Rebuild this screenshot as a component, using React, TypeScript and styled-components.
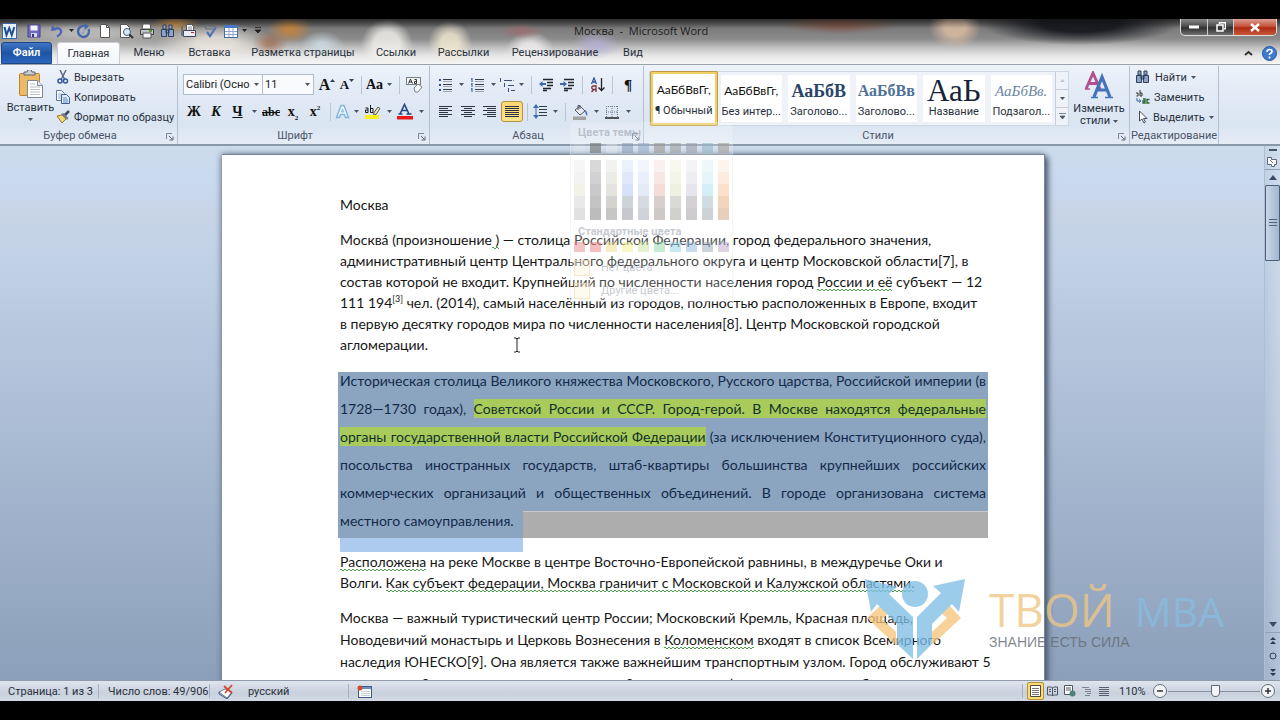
import React from "react";
import styled, { createGlobalStyle, css } from "styled-components";

const UI = `Roboto, "Noto Sans", sans-serif`;
const DOC = `Lato, "Open Sans", sans-serif`;
const SERIF = `"Liberation Serif", serif`;

const Global = createGlobalStyle`
  *, *::before, *::after { box-sizing: border-box; }
  html, body, #root { height: 100%; }
  body { margin: 0; background: #000; font-family: ${UI}; font-size: 11px; color: #28303c; overflow: hidden; }
  button, input, select { font: inherit; color: inherit; margin: 0; padding: 0; border: 0; background: none; }
  button { cursor: default; }
  p { margin: 0; }
  svg { display: block; flex: none; }
`;

/* ---------- window frame ---------- */
const Screen = styled.div`
  display: flex;
  flex-direction: column;
  height: 100vh;
  padding: 19px 0;
  background: #000;
`;
const Chrome = styled.header`
  height: 45px;
  flex: none;
  display: flex;
  flex-direction: column;
  background:
    linear-gradient(#1118 0, #1110 9px),
    radial-gradient(ellipse 26px 26px at 387px 26px, #f2f1ecd0 50%, #fff0 100%),
    radial-gradient(ellipse 22px 22px at 450px 24px, #f3ead2d0 40%, #fff0 100%),
    radial-gradient(ellipse 22px 8px at 522px 12px, #9c6b70c0 20%, #fff0 100%),
    radial-gradient(ellipse 24px 20px at 530px 32px, #f1eeeed0 40%, #fff0 100%),
    radial-gradient(ellipse 24px 14px at 596px 26px, #b3aed6c0 20%, #fff0 100%),
    radial-gradient(ellipse 60px 10px at 840px 5px, #7c4c3ac0 20%, #fff0 100%),
    radial-gradient(ellipse 26px 22px at 955px 8px, #d8b9a0e0 40%, #fff0 100%),
    radial-gradient(ellipse 22px 14px at 290px 10px, #c98238d0 20%, #fff0 100%),
    radial-gradient(ellipse 24px 10px at 175px 4px, #d59a4fd0 20%, #fff0 100%),
    radial-gradient(ellipse 18px 12px at 270px 24px, #a26a4cb0 20%, #fff0 100%),
    radial-gradient(ellipse 22px 14px at 322px 26px, #cfe0e6c0 20%, #fff0 100%),
    radial-gradient(ellipse 60px 20px at 215px 24px, #f4eee6c0 30%, #fff0 100%),
    radial-gradient(ellipse 110px 16px at 90px 14px, #c4c2bfd0 20%, #fff0 100%),
    radial-gradient(ellipse 100px 22px at 1080px 4px, #14161cf0 40%, #fff0 100%),
    linear-gradient(#4c4c4c 0, #7c7c7c 10px, #8b8b8b 20px, #bdbdbd 28px, #e4e4e4 36px, #f6f6f6 45px);
`;
const TitleRow = styled.div`
  display: flex;
  height: 23px;
  align-items: center;
  position: relative;
`;
const Quick = styled.div`
  display: flex;
  align-items: center;
  padding-left: 1px;
`;
const QuickButton = styled.button<{ $w?: number }>`
  width: ${(p) => p.$w ?? 21}px;
  height: 20px;
  display: flex;
  align-items: center;
  justify-content: center;
  gap: 4px;
`;
const Title = styled.h1`
  flex: 1;
  margin: 0;
  padding-left: 308px;
  font: 400 11px/20px "Open Sans", sans-serif;
  color: #1b1b1b;
`;
const WindowButtons = styled.div`
  display: flex;
  align-self: flex-start;
  margin-right: 3px;
  height: 17px;
  border: 1px solid #ddd;
  border-top: 0;
  border-radius: 0 0 5px 5px;
  overflow: hidden;
  background: linear-gradient(#8a8a8a, #4c4c4c 45%, #2f2f2f 55%, #707070);
`;
const WindowButton = styled.button<{ $close?: boolean }>`
  width: ${(p) => (p.$close ? 43 : 26)}px;
  display: flex;
  align-items: center;
  justify-content: center;
  & + & { border-left: 1px solid #ccc; }
  ${(p) => p.$close && css`background: linear-gradient(#d9a093, #c8543c 45%, #ad2a12 55%, #c9583c);`}
`;
const Tabs = styled.nav`
  display: flex;
  height: 22px;
  align-items: stretch;
  padding-left: 1px;
`;
const Tab = styled.button<{ $w: number; $kind?: "file" | "active" }>`
  width: ${(p) => p.$w}px;
  text-align: center;
  white-space: nowrap;
  line-height: 20px;
  border-radius: 3px 3px 0 0;
  ${(p) => p.$kind === "file" && css`
    color: #fff;
    font-weight: 600;
    background: linear-gradient(#3f76c4, #1f54a5 50%, #2a66bd);
    border: 1px solid #1d4788;
  `}
  ${(p) => p.$kind === "active" && css`
    margin-left: 5px;
    background: linear-gradient(#fdfdfe, #f3f6fb);
    border: 1px solid #c9ced6;
    border-bottom: 0;
  `}
`;
const TabTools = styled.div`
  margin-left: auto;
  display: flex;
  align-items: center;
  gap: 9px;
  padding-right: 3px;
`;

/* ---------- ribbon ---------- */
const Ribbon = styled.section`
  flex: none;
  height: 82px;
  display: flex;
  padding-top: 1px;
  border-top: 1px solid #9aa2ae;
  border-bottom: 2px solid #8b98a9;
  background: linear-gradient(#eef3fa, #e3ebf6 30%, #dae5f2 75%, #e4ecf6);
`;
const Group = styled.section<{ $w: number }>`
  width: ${(p) => p.$w}px;
  flex: none;
  display: flex;
  flex-direction: column;
  border-right: 1px solid #b4c0d0;
`;
const GroupBody = styled.div<{ $row?: boolean; $top?: number }>`
  flex: 1;
  min-height: 0;
  display: flex;
  flex-direction: ${(p) => (p.$row ? "row" : "column")};
  padding: ${(p) => p.$top ?? 5}px 0 0 5px;
`;
const GroupLabel = styled.h2<{ $full?: boolean }>`
  margin: 0;
  height: 17px;
  padding-right: ${(p) => (p.$full ? 0 : 17)}px;
  display: flex;
  align-items: center;
  justify-content: center;
  position: relative;
  font-size: 11px;
  font-weight: 400;
  white-space: nowrap;
  color: #4a5568;
`;
const Launcher = styled.button`
  position: absolute;
  right: 3px;
  bottom: 3px;
`;
const ToolRow = styled.div`
  display: flex;
  align-items: center;
  height: 27px;
`;
const Tool = styled.button<{ $w?: number; $on?: boolean }>`
  width: ${(p) => p.$w ?? 22}px;
  height: 21px;
  display: flex;
  align-items: center;
  justify-content: center;
  flex: none;
  ${(p) => p.$on && css`
    background: linear-gradient(#fbd675, #fde28a);
    border: 1px solid #b8913a;
    border-radius: 3px;
  `}
`;
const ToolFace = styled.span`
  flex: 1;
  display: flex;
  justify-content: center;
`;
const ArrowSlot = styled.span`
  width: 12px;
  flex: none;
  display: flex;
  justify-content: center;
`;
const Divider = styled.span`
  width: 1px;
  height: 18px;
  margin: 0 4px;
  background: #bac6d6;
  flex: none;
`;
const Glyph = styled.span<{ $size?: number; $italic?: boolean; $line?: string }>`
  font-family: ${SERIF};
  font-weight: 700;
  font-size: ${(p) => p.$size ?? 14}px;
  line-height: 18px;
  font-style: ${(p) => (p.$italic ? "italic" : "normal")};
  text-decoration: ${(p) => p.$line ?? "none"};
  color: #111;
  sub, sup { font-size: 7px; line-height: 0; }
`;
const Combo = styled.label<{ $w: number }>`
  width: ${(p) => p.$w}px;
  height: 21px;
  display: flex;
  align-items: center;
  background: #f8fafd;
  border: 1px solid #b3bccb;
  & + & { border-left: 0; margin-right: 3px; }
  input { width: 0; flex: 1; padding-left: 2px; outline: 0; color: #222; }
`;
const PasteButton = styled.button`
  width: 51px;
  height: 56px;
  margin-top: 3px;
  display: flex;
  flex-direction: column;
  align-items: center;
  line-height: 16px;
  gap: 2px;
`;
const CommandList = styled.div`
  display: flex;
  flex-direction: column;
`;
const Command = styled.button`
  height: 20px;
  display: flex;
  align-items: center;
  gap: 4px;
  white-space: nowrap;
`;
const Gallery = styled.div`
  width: 420px;
  height: 55px;
  display: flex;
  background: #eff3f9;
  border: 1px solid #cdd6e2;
`;
const StyleCard = styled.button<{ $on?: boolean }>`
  flex: 1;
  min-width: 0;
  display: flex;
  flex-direction: column;
  padding: 3px 1px 0;
  border: 3px solid transparent;
  ${(p) => p.$on && css`
    margin: -1px 0;
    border: 3px solid #f0cf65;
    outline: 1px solid #bb9a4a;
    outline-offset: -1px;
    border-radius: 2px;
  `}
  background: #fff;
  background-clip: padding-box;
  overflow: hidden;
  text-align: center;
`;
const Preview = styled.span<{ $font?: string; $size: number; $color?: string; $weight?: number; $italic?: boolean }>`
  width: 100%;
  height: 27px;
  line-height: 26px;
  white-space: nowrap;
  overflow: hidden;
  font-family: ${(p) => p.$font ?? DOC};
  font-size: ${(p) => p.$size}px;
  font-weight: ${(p) => p.$weight ?? 400};
  font-style: ${(p) => (p.$italic ? "italic" : "normal")};
  color: ${(p) => p.$color ?? "#111"};
`;
const CardName = styled.span`
  width: 100%;
  line-height: 14px;
  white-space: nowrap;
`;
const GalleryScroll = styled.div`
  width: 13px;
  display: flex;
  flex-direction: column;
  border-left: 1px solid #c3cddb;
  button { flex: 1; display: flex; align-items: center; justify-content: center; }
  button + button { border-top: 1px solid #c3cddb; }
`;
const ChangeStyles = styled.button`
  width: 60px;
  height: 56px;
  display: flex;
  flex-direction: column;
  align-items: center;
  line-height: 12px;
  span { display: flex; align-items: center; gap: 3px; }
  svg { margin-bottom: 3px; }
  span svg { margin: 0; }
`;

/* ---------- document ---------- */
const Workspace = styled.main`
  flex: 1;
  min-height: 0;
  display: flex;
  position: relative;
  background: linear-gradient(#cddceb 0, #c9d9f0 36px, #c8d5e7 64px, #c1d1e5 120px, #b6c7de 190px, #8c9fba 100%);
`;
const Canvas = styled.div`
  flex: 1;
  min-width: 0;
  overflow: hidden;
  padding: 8px 0 0 3px;
`;
const Paper = styled.article`
  width: 823px;
  min-height: 100%;
  margin: 0 auto;
  padding: 39px 57px 0 118px;
  background: #fff;
  border: 1px solid #76869a;
  border-width: 1px 1px 0 0;
  box-shadow: 3px 3px 6px #4c5a6e, -1px 0 6px #75859b;
  font-family: ${DOC};
  font-size: 14px;
  color: #161616;
  position: relative;
`;
const Paragraph = styled.p<{ $leading?: number }>`
  margin-bottom: 14px;
  line-height: ${(p) => p.$leading ?? 21}px;
  sup { font-size: 9px; line-height: 0; }
`;
const Line = styled.span`
  display: block;
  white-space: nowrap;
`;
const Grammar = styled.span`
  padding-bottom: 1px;
  background:
    linear-gradient(45deg, #0000 35%, #4ba04b 35% 65%, #0000 65%) 0 100% / 4px 2px repeat-x,
    linear-gradient(-45deg, #0000 35%, #4ba04b 35% 65%, #0000 65%) 2px 100% / 4px 2px repeat-x;
`;
const Selected = styled.div`
  display: flow-root;
  position: relative;
  width: 650px;
  height: 166px;
  margin: 17px 0 13px -2px;
  background: #8ba5c0;
  color: #12294a;
`;
const SelectedText = styled.p`
  margin-top: -5px;
  padding: 0 2px;
  position: relative;
  line-height: 28px;
`;
const Justified = styled(Line)`
  text-align: justify;
  text-align-last: justify;
  white-space: normal;
`;
const Mark = styled.mark`
  background: #a8cb5c;
  color: #12312a;
  padding: 1px 0;
`;
const Unselected = styled.div`
  position: absolute;
  left: 185px;
  right: 0;
  bottom: 0;
  height: 27px;
  background: #adadad;
  border-top: 1px solid #c6cad0;
`;
const Tail = styled.div`
  position: absolute;
  left: 2px;
  top: 100%;
  width: 183px;
  height: 14px;
  background: #accbee;
`;
const Caret = styled.svg`
  position: absolute;
  left: 291px;
  top: 182px;
`;

/* fading colour menu */
const Menu = styled.div`
  position: absolute;
  left: 570px;
  top: -24px;
  width: 163px;
  height: 180px;
  padding: 2px 3px;
  background: #ffffff38;
  border: 1px solid #dfe3e955;
  color: #8d949f80;
  overflow: hidden;
`;
const MenuTitle = styled.div`
  padding-left: 4px;
  font-weight: 700;
  line-height: 15px;
`;
const Swatches = styled.div<{ $top: number }>`
  display: flex;
  gap: 5px;
  margin-top: ${(p) => p.$top}px;
`;
const Column = styled.div`
  width: 11px;
`;
const Swatch = styled.div<{ $c: string; $h: number }>`
  width: 11px;
  height: ${(p) => p.$h}px;
  background: ${(p) => p.$c};
`;
const MenuItem = styled.button`
  display: flex;
  align-items: center;
  gap: 11px;
  height: 23px;
  &:first-of-type { margin-top: 4px; }
  i { width: 16px; height: 16px; border: 1px solid #ecd9a890; background: #fff3d660; }
`;

/* scrollbar */
const Scrollbar = styled.aside`
  width: 16px;
  display: flex;
  flex-direction: column;
  align-items: center;
  background: linear-gradient(90deg, #b9c9dc80, #d4dfec90);
  border-left: 1px solid #aebdd0;
`;
const ScrollButton = styled.button<{ $h: number; $line?: boolean }>`
  width: 100%;
  height: ${(p) => p.$h}px;
  display: flex;
  align-items: center;
  justify-content: center;
  ${(p) => p.$line && css`border-top: 1px solid #8fa0b8;`}
`;
const Thumb = styled.div`
  width: 100%;
  height: 76px;
  display: flex;
  align-items: center;
  justify-content: center;
  border: 1px solid #4e6079;
  border-radius: 1px;
  background: linear-gradient(90deg, #c9d6e6, #a3b6ce);
`;
const Spacer = styled.div`
  flex: 1;
`;

/* watermark */
const Watermark = styled.div`
  position: absolute;
  right: 53px;
  bottom: 18px;
  display: flex;
  pointer-events: none;
`;
const Brand = styled.div`
  width: 238px;
  margin-left: 24px;
`;
const BrandName = styled.div`
  display: flex;
  align-items: baseline;
  gap: 20px;
  height: 54px;
  line-height: 62px;
  font-family: "Open Sans", sans-serif;
  font-size: 46px;
  font-weight: 500;
  white-space: nowrap;
  color: #efc684c8;
  span { font-size: 41px; font-weight: 400; color: #86bde0c8; }
`;
const Motto = styled.div`
  font: 14px/20px "Liberation Sans", sans-serif;
  white-space: nowrap;
  color: #656b74d0;
`;

/* ---------- status bar ---------- */
const Status = styled.footer`
  flex: none;
  height: 21px;
  display: flex;
  align-items: center;
  padding-left: 8px;
  border-top: 1px solid #8f9bab;
  background: linear-gradient(#dfe5ee, #c9d1de 60%, #d3dae5);
`;
const StatusText = styled.span<{ $w: number }>`
  width: ${(p) => p.$w}px;
  white-space: nowrap;
`;
const ZoomValue = styled(StatusText)`
  padding-left: 7px;
`;
const StatusSep = styled.span<{ $after?: number }>`
  width: 1px;
  height: 14px;
  margin-right: ${(p) => p.$after ?? 9}px;
  background: #a5b0c0;
`;
const Language = styled(StatusText)`
  padding-left: 14px;
`;
const ViewButton = styled.button<{ $on?: boolean }>`
  width: 17px;
  height: 18px;
  display: flex;
  align-items: center;
  justify-content: center;
  ${(p) => p.$on && css`background: #fbdc78; border: 1px solid #b78f35; border-radius: 2px;`}
`;
const ZoomButton = styled.button`
  width: 16px;
  height: 16px;
  display: flex;
`;
const ZoomGroup = styled.div`
  display: flex;
  align-items: center;
  padding-right: 4px;
`;
const ZoomSlider = styled.input`
  width: 92px;
  height: 16px;
  appearance: none;
  background: linear-gradient(#8590a0, #8590a0) center / 100% 1px no-repeat;
  &::-webkit-slider-thumb {
    appearance: none;
    width: 9px;
    height: 12px;
    background: #f2f4f7;
    border: 1px solid #5d6878;
    border-radius: 1px 1px 5px 5px;
  }
`;

/* ---------- drawings ---------- */
const Arrow = ({ c = "#4b5565" }: { c?: string }) => (
  <svg width="5" height="3" viewBox="0 0 5 3"><path d="M0 0h5L2.5 3z" fill={c} /></svg>
);
const Svg = ({ s = 16, h, children }: { s?: number; h?: number; children: React.ReactNode }) => (
  <svg width={s} height={h ?? s} viewBox={`0 0 ${s} ${h ?? s}`} fill="none">{children}</svg>
);
const Lines = ({ rows }: { rows: [number, number][] }) => (
  <Svg s={14} h={13}>
    {rows.map(([a, b], i) => <path key={i} d={`M${a} ${i * 2 + 1.5}H${b}`} stroke="#2d3440" />)}
  </Svg>
);
const WordLogo = () => (
  <Svg s={16}><rect x=".5" y=".5" width="14" height="15" fill="#e9f1fb" stroke="#3a6ba8" /><path d="M2.5 4l2 8L7.300 5l2.500 7 2.500-8" stroke="#1d4f94" strokeWidth="2" /></Svg>
);
const Save = () => (
  <Svg><path d="M2 2h12v12H2z" fill="#6f6ac0" stroke="#45418f" /><path d="M4.500 2.500h7v5h-7z" fill="#f3f3fb" /><path d="M5 10h6v4H5z" fill="#d5d5e8" /><path d="M6 11h2v3H6z" fill="#36337f" /></Svg>
);
const Undo = () => (
  <Svg><path d="M5 6.500c4-3 8 0 7 3-.5 2-2 3-4 4" stroke="#4a66b8" strokeWidth="2.200" /><path d="M2 8l1-6 5 5z" fill="#4a66b8" /></Svg>
);
const Redo = () => (
  <Svg><path d="M12.500 6a5.500 5.500 0 1 1-4-3" stroke="#4668ae" strokeWidth="2.400" /><path d="M8 0l5 3-4 4z" fill="#4668ae" /><path d="M8 6v4H5" stroke="#7f9bd0" /></Svg>
);
const Blank = () => <Svg><path d="M3.500 1.500h6l3 3v10h-9z" fill="#fff" stroke="#555" /><path d="M9.500 1.500v3h3" stroke="#555" /></Svg>;
const PreviewIcon = () => (
  <Svg><path d="M2.500 1.500h6l3 3v10h-9z" fill="#fff" stroke="#555" /><circle cx="9" cy="9" r="3.500" fill="#d7e8f7" stroke="#47566b" /><path d="M11.500 11.500L15 15" stroke="#333" strokeWidth="2" /></Svg>
);
const Printer = () => (
  <Svg><path d="M4 1h7l1 5H3z" fill="#fff" stroke="#555" /><path d="M1.500 6.500h13v5h-13z" fill="#bcc1c9" stroke="#444" /><path d="M4 10h8v5H4z" fill="#f4f4f4" stroke="#555" /><path d="M10 8h3" stroke="#5a9a3b" strokeWidth="2" /></Svg>
);
const Binoculars = () => (
  <Svg><path d="M3 2h3v4H3zM9 2h3v4H9zM1.500 6.500h5v7h-5zM8.500 6.500h5v7h-5zM6 7h3v3H6z" fill="#8fa3c4" stroke="#2d3f61" /></Svg>
);
const Mail = () => (
  <Svg><path d="M5.500 1.500h5l2 2v6h-7z" fill="#fff" stroke="#556" /><path d="M2.500 7.500h12v6h-12z" fill="#e9edf4" stroke="#445" /><path d="M7 4h4M7 6h4" stroke="#889" /><path d="M10 9.500h3" stroke="#a33" /><path d="M1 3v9h2" stroke="#667" strokeWidth="1.500" /></Svg>
);
const Check = () => (
  <Svg><path d="M2 4h3M7 3h6M3 6h8" stroke="#5d6a80" /><path d="M5 9l3 4 6-9" stroke="#5170b5" strokeWidth="2.200" /></Svg>
);
const TableIcon = () => (
  <Svg s={14}><rect x=".5" y="1.500" width="13" height="12" fill="#fff" stroke="#4a6aa5" /><path d="M0 1h14v3H0z" fill="#4a77c4" /><path d="M1 7.500h12M1 10.500h12M5 4v9M9 4v9" stroke="#8ea6cf" /></Svg>
);
const Clipboard = () => (
  <Svg s={26} h={28}>
    <rect x="1.500" y="3.500" width="20" height="22" rx="1" fill="#edb963" stroke="#b98433" />
    <path d="M6 5h11v-3h-3a2.500 2.500 0 0 0-5 0H6z" fill="#c9ccd2" stroke="#5e636d" />
    <path d="M9.500 10.500h10l5 5v12h-15z" fill="#fff" stroke="#7f8794" />
    <path d="M19.500 10.500v5h5" fill="#e7ebf1" stroke="#7f8794" />
    <path d="M12 14h5M12 17h10M12 19.500h10M12 22h10M12 24.500h10" stroke="#b7bec9" />
  </Svg>
);
const Scissors = () => (
  <Svg s={14}><path d="M4 0l4.500 9M10 0L5.500 9" stroke="#5c6c86" strokeWidth="1.500" /><circle cx="4" cy="11" r="2" stroke="#2e55a0" strokeWidth="1.500" /><circle cx="9.500" cy="11" r="2" stroke="#2e55a0" strokeWidth="1.500" /></Svg>
);
const Copy = () => (
  <Svg s={14}><path d="M.5.5h5l3 3v7h-8z" fill="#fff" stroke="#5a78a8" /><path d="M2 4h4M2 6h4M2 8h4" stroke="#8fa8d0" /><path d="M5.500 4.500h5l3 3v6h-8z" fill="#dfe9f8" stroke="#3f5f96" /><path d="M7 8h4M7 10h5M7 12h5" stroke="#6b8cc2" /></Svg>
);
const Brush = () => (
  <Svg s={14}><path d="M1 6l5 7 4-4-4-4z" fill="#f3d578" stroke="#9b7b2c" /><path d="M5 4l6 6 1.500-2L7.500 3z" fill="#777e8a" /><path d="M9 5l4-4" stroke="#3e4a5e" strokeWidth="2.500" /></Svg>
);
const LauncherIcon = () => (
  <Svg s={8}><path d="M.5 6V.5H6" stroke="#7c8899" /><path d="M3 3l3.500 3.500M7 3.500V7H3.500" stroke="#5b6675" /></Svg>
);
const ClearFormat = () => (
  <Svg s={18}><rect x=".5" y="1.500" width="14" height="7" fill="#f5f6f8" stroke="#777f8b" /><path d="M2.500 7.500l2-4.500 2 4.500M3 6h3M10.500 5v2.500H8.500V5.500h2M8.500 3.500h2v2" stroke="#333" /><path d="M8 12l4-4 4 3-4 5H9z" fill="#f7f7f9" stroke="#7b8494" /></Svg>
);
const TextEffect = () => (
  <Svg s={15}><path d="M1.500 13.500L6 1.500h3l4.500 12h-3l-1-3h-4l-1 3z" fill="#eef8fd" stroke="#7fb4d8" strokeWidth="1.400" /><path d="M6.500 8h2L7.500 5z" fill="#fff" stroke="#7fb4d8" /></Svg>
);
const Highlighter = () => (
  <Svg s={17} h={17}><path d="M1 12h14v4H1z" fill="#fbee1e" /><path d="M9 11l5-7 2 1.500-4 6z" fill="#e8e2b8" stroke="#5b5b4b" /><path d="M1.500 5h2.500v4.500H1.500V7H4M6.500 2v7.500H9V5.500H6.500" stroke="#1b1b1b" /></Svg>
);
const FontColor = () => (
  <Svg s={16} h={17}><path d="M1.500 11h4M9.500 11h5M3 11L7.500 1.500 12 11M5 7.500h5" stroke="#27477f" strokeWidth="1.600" /><path d="M0 13h16v3.500H0z" fill="#e8191d" /></Svg>
);
const Bullets = ({ numbered }: { numbered?: boolean }) => (
  <Svg s={15} h={14}>
    {[2, 7, 12].map((y) => (
      <g key={y}>
        {numbered ? <path d={`M2 ${y - 2}v4M1 ${y - 1}h1`} stroke="#2d4f8d" /> : <path d={`M1 ${y - 1}h2v2H1z`} fill="#2d4f8d" />}
        <path d={`M5 ${y - 0.5}h9`} stroke="#333b48" />
        <path d={`M5 ${y + 1.5}h9`} stroke="#9aa4b2" />
      </g>
    ))}
  </Svg>
);
const Multilevel = () => (
  <Svg s={16} h={14}><path d="M1.500 0v4M5 2.500h8M5.500 5v4M9 7.500h6M9.500 10v4M12 12.500h4" stroke="#3d4f74" /><path d="M14 2.500h1" stroke="#999" /></Svg>
);
const Indent = ({ out }: { out?: boolean }) => (
  <Svg s={15} h={14}><path d="M4 1.500h10M8 4.500h6M8 7.500h6M4 10.500h8M4 12.500h4" stroke="#22272f" strokeWidth="1.300" /><path d={out ? "M0 6l3.500-3v2H7v2H3.500v2z" : "M7 6L3.500 3v2H0v2h3.500v2z"} fill="#3d69b3" /></Svg>
);
const Sort = () => (
  <Svg s={15} h={16}><path d="M1.500 7L4 1l2.500 6M2.500 5h3" stroke="#2f57a3" strokeWidth="1.300" /><path d="M6 15V9H3.500a1.700 1.700 0 0 0 0 3.500H6M4 12.500L1.500 15" stroke="#7a3038" strokeWidth="1.300" /><path d="M11.500 1v12M8.500 10.500l3 3 3-3" stroke="#222" strokeWidth="1.300" /></Svg>
);
const Spacing = () => (
  <Svg s={15} h={15}><path d="M6 2.500h8M6 5.500h8M6 8.500h8M6 11.500h8" stroke="#333b48" /><path d="M3 0L0 4h6zM3 15l-3-4h6z" fill="#3d6cb5" /><path d="M3 3v9" stroke="#3d6cb5" /></Svg>
);
const Bucket = () => (
  <Svg s={17} h={16}><path d="M3 6l5-4 5 5-5 4z" fill="#e6e9ee" stroke="#4d5764" /><path d="M6 6V1.500h2V5" stroke="#4d5764" /><path d="M13 6c2 1 3 4 2 6-1-1-2-3-2-6z" fill="#3f74c2" /><path d="M1 12.500h13V16H1z" fill="#a3a3a3" /></Svg>
);
const Borders = () => (
  <Svg s={14}><path d="M1.500 1v11M7 1v11M12.500 1v11M1 1.500h12M1 7h12" stroke="#6c7789" strokeDasharray="1 1" /><path d="M0 13h14" stroke="#222" strokeWidth="1.500" /></Svg>
);
const StylesIcon = () => (
  <Svg s={30} h={29}>
    <path d="M2 18L9 2l7 16M4.500 12.500h9" stroke="#b0508f" strokeWidth="2.800" />
    <path d="M1 18h5M12 18h5" stroke="#b0508f" strokeWidth="1.500" />
    <path d="M10 26L18 6l8 20M13 19h10" stroke="#4273bd" strokeWidth="3.200" />
    <path d="M7 26.500h7M21 26.500h8" stroke="#4273bd" strokeWidth="1.600" />
  </Svg>
);
const Replace = () => (
  <Svg s={15} h={14}><path d="M1 3h2v3H1.500M5 0v6h2V3H5" stroke="#333" /><path d="M2 8v3h3M4 9.500l2 1.500-2 1.500" stroke="#3b67b0" /><path d="M8 9h2v4H8v-2h2M14.500 9.500H12V13h2.500" stroke="#2d6a35" strokeWidth="1.400" /></Svg>
);
const Pointer = () => <Svg s={14}><path d="M4.500 1v10l2.500-2 2 4 1.500-1-2-3.500H12z" fill="#fff" stroke="#444b57" /></Svg>;
const Help = () => (
  <Svg s={15}><circle cx="7.500" cy="7.500" r="7" fill="#3f7bd0" stroke="#2a569c" /><path d="M5 6c0-3.500 5-3 5-.5 0 2-2.500 1.500-2.500 3.500M7.500 10.500v2" stroke="#fff" strokeWidth="1.700" /></Svg>
);
const Proof = () => (
  <Svg s={16} h={15}><path d="M1 8l6-3 7 3-5 6z" fill="#fff" stroke="#68778f" /><path d="M1 8v2l8 5 5-6" stroke="#3d5c90" /><path d="M6 2l8 7M14 1L7 9" stroke="#d8472e" strokeWidth="1.800" /></Svg>
);
const Macro = () => (
  <Svg s={15} h={13}><rect x="1.500" y="1.500" width="13" height="11" fill="#fff" stroke="#3e5a8a" /><path d="M2 3h12" stroke="#6d8fc8" strokeWidth="2" /><path d="M4 6.500h9M4 8.500h9M4 10.500h9" stroke="#c2ccda" /><circle cx="3" cy="3" r="2.500" fill="#cf4a2c" /></Svg>
);
const Logo = () => (
  <svg width="100" height="84" viewBox="0 0 100 84" opacity=".78">
    <path d="M16 27L2 40l29 27V54L17 41l8-7zM84 27l12 13-29 27V54l15-14-8-7z" fill="#f7c67d" />
    <circle cx="50" cy="16" r="13" fill="#7fbfe6" />
    <path d="M0 1l32 8-8 7 24 23v42L32 66V46L12 26l-6 8zM100 1L68 8l8 7-24 24v42l15-15V46l20-20 7 8z" fill="#7fbfe6" />
  </svg>
);

const Split = ({ w, label, children }: { w: number; label: string; children: React.ReactNode }) => (
  <Tool $w={w} aria-label={label}><ToolFace>{children}</ToolFace><ArrowSlot><Arrow /></ArrowSlot></Tool>
);

const styles = [
  { sample: "АаБбВвГг,", name: "¶ Обычный", size: 12, on: true },
  { sample: "АаБбВвГг,", name: "Без интер...", size: 12 },
  { sample: "АаБбВ", name: "Заголово...", size: 18, font: SERIF, color: "#2b4568", weight: 700 },
  { sample: "АаБбВв", name: "Заголово...", size: 16, font: SERIF, color: "#4f7199", weight: 700 },
  { sample: "АаЬ", name: "Название", size: 31, font: SERIF, color: "#16243b" },
  { sample: "АаБбВв.", name: "Подзагол...", size: 15, font: SERIF, color: "#6c86a3", italic: true },
];

const theme = ["#ffffff20", "#70707099", "#eeeeee50", "#7f94b080", "#8ba3c480", "#98938a90", "#9c9c9890", "#9a98a890", "#90b5c890", "#a39c9490"];
const tints: string[][] = [
  ["#f4f4f4", "#f0f0f0", "#efefe4", "#e4e4e4", "#dadada"],
  ["#cfcfcf", "#c6c6c6", "#bdbdbd", "#b5b5b5", "#adadad"],
  ["#efefeb", "#e8e8e2", "#deded6", "#c9c9c5", "#b9b9b9"],
  ["#e6ecfc", "#dbe3fb", "#cfdafa", "#c3c8d0", "#b9bcc2"],
  ["#eff4fb", "#e5edfa", "#dde6f5", "#ced3da", "#c5c9cf"],
  ["#faeceb", "#f7e0de", "#f3d3d0", "#cfc3c2", "#c3bbba"],
  ["#f6f7ee", "#f1f3e4", "#eaedda", "#d0d1cc", "#c5c6c1"],
  ["#f2f0f5", "#ebe8f0", "#e2deea", "#c9c7cc", "#c0bfc3"],
  ["#eaf6fa", "#def1f7", "#cce9f2", "#c4d5db", "#c0c8cc"],
  ["#fdf1e7", "#fce8d6", "#fbdcc0", "#efccae", "#e3c4ad"],
];
const standard = ["#e88a8a", "#f07a7a", "#f0d98a", "#f3f08a", "#c8e3a0", "#8fd6a8", "#8fd0e8", "#8fb8e0", "#98a8c0", "#c0a8d0"];

export default function App() {
  return (
    <Screen>
      <Global />
      <Chrome>
        <TitleRow>
          <Quick>
            <QuickButton $w={18} aria-label="Word"><WordLogo /></QuickButton>
            <QuickButton $w={30} aria-label="Сохранить"><Save /></QuickButton>
            <QuickButton $w={24} aria-label="Отменить"><Undo /><Arrow c="#222" /></QuickButton>
            <QuickButton aria-label="Повторить"><Redo /></QuickButton>
            <QuickButton aria-label="Создать"><Blank /></QuickButton>
            <QuickButton aria-label="Просмотр"><PreviewIcon /></QuickButton>
            <QuickButton aria-label="Печать"><Printer /></QuickButton>
            <QuickButton aria-label="Найти"><Binoculars /></QuickButton>
            <QuickButton aria-label="Отправить"><Mail /></QuickButton>
            <QuickButton aria-label="Правописание"><Check /></QuickButton>
            <QuickButton $w={30} aria-label="Таблица"><TableIcon /><Arrow c="#222" /></QuickButton>
            <QuickButton $w={16} aria-label="Настройка панели">
              <Svg s={6} h={7}><path d="M0 .5h6M0 3h6L3 6z" stroke="#222" fill="#222" strokeWidth=".8" /></Svg>
            </QuickButton>
          </Quick>
          <Title>Москва&nbsp; -&nbsp; Microsoft Word</Title>
          <WindowButtons>
            <WindowButton aria-label="Свернуть"><Svg s={10} h={4}><path d="M0 2h10" stroke="#fff" strokeWidth="3" /></Svg></WindowButton>
            <WindowButton aria-label="Развернуть"><Svg s={10}><path d="M3.500 2V.8h6v6H8M1 3h6v6H1z" stroke="#fff" strokeWidth="1.500" /></Svg></WindowButton>
            <WindowButton $close aria-label="Закрыть"><Svg s={10} h={9}><path d="M1 1l8 7M9 1L1 8" stroke="#fff" strokeWidth="2.400" /></Svg></WindowButton>
          </WindowButtons>
        </TitleRow>
        <Tabs>
          <Tab $w={51} $kind="file">Файл</Tab>
          <Tab $w={63} $kind="active">Главная</Tab>
          <Tab $w={58}>Меню</Tab>
          <Tab $w={63}>Вставка</Tab>
          <Tab $w={124}>Разметка страницы</Tab>
          <Tab $w={62}>Ссылки</Tab>
          <Tab $w={73}>Рассылки</Tab>
          <Tab $w={110}>Рецензирование</Tab>
          <Tab $w={46}>Вид</Tab>
          <TabTools>
            <Svg s={9} h={6}><path d="M1 5l3.500-3L8 5" stroke="#333" strokeWidth="2" /></Svg>
            <Help />
          </TabTools>
        </Tabs>
      </Chrome>

      <Ribbon>
        <Group $w={178}>
          <GroupBody $row $top={1}>
            <PasteButton><Clipboard /><span>Вставить</span><Arrow /></PasteButton>
            <CommandList>
              <Command><Scissors />Вырезать</Command>
              <Command><Copy />Копировать</Command>
              <Command><Brush />Формат по образцу</Command>
            </CommandList>
          </GroupBody>
          <GroupLabel>Буфер обмена<Launcher aria-label="Параметры буфера обмена"><LauncherIcon /></Launcher></GroupLabel>
        </Group>

        <Group $w={252}>
          <GroupBody>
            <ToolRow>
              <Combo $w={80}><input aria-label="Шрифт" defaultValue="Calibri (Осно" /><ArrowSlot><Arrow /></ArrowSlot></Combo>
              <Combo $w={51}><input aria-label="Размер шрифта" defaultValue="11" /><ArrowSlot><Arrow /></ArrowSlot></Combo>
              <Tool $w={20} aria-label="Увеличить размер"><Glyph $size={16}>A</Glyph><Svg s={5} h={12}><path d="M0 3l2.500-3L5 3z" fill="#333f55" /></Svg></Tool>
              <Tool $w={20} aria-label="Уменьшить размер"><Glyph $size={13}>A</Glyph><Svg s={5} h={12}><path d="M0 0l2.500 3L5 0z" fill="#333f55" /></Svg></Tool>
              <Divider />
              <Split w={29} label="Регистр"><Glyph>Aa</Glyph></Split>
              <Divider />
              <Tool aria-label="Очистить формат"><ClearFormat /></Tool>
            </ToolRow>
            <ToolRow>
              <Tool><Glyph>Ж</Glyph></Tool>
              <Tool><Glyph $italic>К</Glyph></Tool>
              <Split w={33} label="Подчеркнутый"><Glyph $line="underline">Ч</Glyph></Split>
              <Tool><Glyph $size={12} $line="line-through">abc</Glyph></Tool>
              <Tool><Glyph>x<sub>2</sub></Glyph></Tool>
              <Tool><Glyph>x<sup>2</sup></Glyph></Tool>
              <Divider />
              <Split w={27} label="Текстовые эффекты"><TextEffect /></Split>
              <Split w={33} label="Цвет выделения"><Highlighter /></Split>
              <Split w={32} label="Цвет текста"><FontColor /></Split>
            </ToolRow>
          </GroupBody>
          <GroupLabel>Шрифт<Launcher aria-label="Параметры шрифта"><LauncherIcon /></Launcher></GroupLabel>
        </Group>

        <Group $w={214}>
          <GroupBody>
            <ToolRow>
              <Split w={32} label="Маркеры"><Bullets /></Split>
              <Split w={32} label="Нумерация"><Bullets numbered /></Split>
              <Split w={28} label="Многоуровневый список"><Multilevel /></Split>
              <Divider />
              <Tool $w={21} aria-label="Уменьшить отступ"><Indent out /></Tool>
              <Tool $w={21} aria-label="Увеличить отступ"><Indent /></Tool>
              <Divider />
              <Tool $w={21} aria-label="Сортировка"><Sort /></Tool>
              <Divider />
              <Tool aria-label="Отобразить все знаки"><Glyph $size={15}>¶</Glyph></Tool>
            </ToolRow>
            <ToolRow>
              <Tool aria-label="По левому краю"><Lines rows={[[0, 13], [0, 9], [0, 13], [0, 9], [0, 13], [0, 9]]} /></Tool>
              <Tool aria-label="По центру"><Lines rows={[[0, 14], [3, 11], [0, 14], [3, 11], [0, 14], [3, 11]]} /></Tool>
              <Tool aria-label="По правому краю"><Lines rows={[[0, 13], [4, 13], [0, 13], [4, 13], [0, 13], [4, 13]]} /></Tool>
              <Tool $on aria-label="По ширине"><Lines rows={[[0, 14], [0, 14], [0, 14], [0, 14], [0, 14], [0, 14]]} /></Tool>
              <Divider />
              <Split w={29} label="Интервал"><Spacing /></Split>
              <Divider />
              <Split w={32} label="Заливка"><Bucket /></Split>
              <Split w={32} label="Границы"><Borders /></Split>
            </ToolRow>
          </GroupBody>
          <GroupLabel>Абзац<Launcher aria-label="Параметры абзаца"><LauncherIcon /></Launcher></GroupLabel>
        </Group>

        <Group $w={486}>
          <GroupBody $row>
            <Gallery>
              {styles.map((s, i) => (
                <StyleCard key={i} $on={s.on}>
                  <Preview $size={s.size} $font={s.font} $color={s.color} $weight={s.weight} $italic={s.italic}>{s.sample}</Preview>
                  <CardName>{s.name}</CardName>
                </StyleCard>
              ))}
              <GalleryScroll>
                <button aria-label="Вверх"><Svg s={5} h={3}><path d="M0 3h5L2.500 0z" fill="#c0c8d4" /></Svg></button>
                <button aria-label="Вниз"><Arrow /></button>
                <button aria-label="Ещё"><Svg s={7} h={7}><path d="M0 .5h7M1 3h5L3.500 6z" stroke="#4b5565" strokeWidth=".7" fill="#4b5565" /></Svg></button>
              </GalleryScroll>
            </Gallery>
            <ChangeStyles><StylesIcon /><span>Изменить</span><span>стили <Arrow /></span></ChangeStyles>
          </GroupBody>
          <GroupLabel>Стили<Launcher aria-label="Параметры стилей"><LauncherIcon /></Launcher></GroupLabel>
        </Group>

        <Group $w={89}>
          <GroupBody $top={1}>
            <CommandList>
              <Command><Binoculars />Найти <Arrow /></Command>
              <Command><Replace />Заменить</Command>
              <Command><Pointer />Выделить <Arrow /></Command>
            </CommandList>
          </GroupBody>
          <GroupLabel $full>Редактирование</GroupLabel>
        </Group>
      </Ribbon>

      <Workspace>
        <Canvas>
          <Paper>
            <Paragraph>Москва</Paragraph>
            <Paragraph>
              <Line>Москва́ (произношение<Grammar> )</Grammar> — столица Российской Федерации, город федерального значения,</Line>
              <Line>административный центр Центрального федерального округа и центр Московской области[7], в</Line>
              <Line>состав которой не входит. Крупнейший по численности населения город <Grammar>России и её</Grammar> субъект — 12</Line>
              <Line>111 194<sup>[3]</sup> чел. (2014), самый населённый из городов, полностью расположенных в Европе, входит</Line>
              <Line>в первую десятку городов мира по численности населения[8]. Центр Московской городской</Line>
              <Line>агломерации.</Line>
            </Paragraph>
            <Selected>
              <Unselected />
              <Tail />
              <SelectedText>
                <Justified>Историческая столица Великого княжества Московского, Русского царства, Российской империи (в</Justified>
                <Justified>1728—1730 годах), <Mark>Советской России и СССР. Город-герой. В Москве находятся федеральные</Mark></Justified>
                <Justified><Mark>органы государственной власти Российской Федерации</Mark> (за исключением Конституционного суда),</Justified>
                <Justified>посольства иностранных государств, штаб-квартиры большинства крупнейших российских</Justified>
                <Justified>коммерческих организаций и общественных объединений. В городе организована система</Justified>
                <Line>местного самоуправления.</Line>
              </SelectedText>
            </Selected>
            <Paragraph>
              <Line><Grammar>Расположена</Grammar> на реке Москве в центре Восточно-Европейской равнины, в междуречье Оки и</Line>
              <Line>Волги. <Grammar>Как субъект федерации, Москва граничит с Московской и Калужской областями.</Grammar></Line>
            </Paragraph>
            <Paragraph $leading={22}>
              <Line>Москва — важный туристический центр России; Московский Кремль, Красная площадь,</Line>
              <Line>Новодевичий монастырь и Церковь Вознесения в <Grammar>Коломенском</Grammar> входят в список Всемирного</Line>
              <Line>наследия ЮНЕСКО[9]. Она является также важнейшим транспортным узлом. Город обслуживают 5</Line>
              <Line>аэропортов, 9 железнодорожных вокзалов, 3 речных порта (имеется речное сообщение с</Line>
            </Paragraph>
            <Caret width="8" height="16" viewBox="0 0 8 16" fill="none"><path d="M1 1h2l1 1 1-1h2M4 2v12M1 15h2l1-1 1 1h2" stroke="#222" /></Caret>
          </Paper>
        </Canvas>
        <Scrollbar>
          <ScrollButton $h={8} aria-label="Разделить"><Svg s={8} h={2}><path d="M0 1h8" stroke="#46566e" strokeWidth="2" /></Svg></ScrollButton>
          <ScrollButton $h={15} aria-label="Линейка"><Svg s={11} h={11}><path d="M.5 1.500h4v2h5v5h-2v2h-3v-2h-4z" fill="#fff" stroke="#5c6a7d" /><path d="M3 4l3 3" stroke="#5c6a7d" /></Svg></ScrollButton>
          <ScrollButton $h={16} $line aria-label="Вверх"><Svg s={8} h={5}><path d="M0 5h8L4 0z" fill="#3c4c64" /></Svg></ScrollButton>
          <Thumb><Svg s={8} h={8}><path d="M0 .5h8M0 3.500h8M0 6.500h8" stroke="#52637b" /></Svg></Thumb>
          <Spacer />
          <ScrollButton $h={16} aria-label="Вниз"><Svg s={8} h={5}><path d="M0 0h8L4 5z" fill="#3c4c64" /></Svg></ScrollButton>
          <ScrollButton $h={16} $line aria-label="Предыдущая страница"><Svg s={6} h={7}><path d="M0 3h6L3 0zM0 7h6L3 4z" fill="#2c3a50" /></Svg></ScrollButton>
          <ScrollButton $h={16} aria-label="Выбор объекта"><Svg s={8}><circle cx="4" cy="4" r="3" stroke="#34435a" /></Svg></ScrollButton>
          <ScrollButton $h={16} aria-label="Следующая страница"><Svg s={6} h={7}><path d="M0 0h6L3 3zM0 4h6L3 7z" fill="#2c3a50" /></Svg></ScrollButton>
        </Scrollbar>
        <Menu>
          <MenuTitle>Цвета темы</MenuTitle>
          <Swatches $top={3}>{theme.map((c, i) => <Swatch key={i} $c={c} $h={10} />)}</Swatches>
          <Swatches $top={7}>
            {tints.map((col, i) => <Column key={i}>{col.map((c, j) => <Swatch key={j} $c={c + "d0"} $h={12} />)}</Column>)}
          </Swatches>
          <Swatches $top={4}><MenuTitle>Стандартные цвета</MenuTitle></Swatches>
          <Swatches $top={3}>{standard.map((c, i) => <Swatch key={i} $c={c + "80"} $h={10} />)}</Swatches>
          <MenuItem><i />Нет цвета</MenuItem>
          <MenuItem><i />Другие цвета...</MenuItem>
        </Menu>
        <Watermark>
          <Logo />
          <Brand>
            <BrandName>ТВОЙ<span>МВА</span></BrandName>
            <Motto>ЗНАНИЕ ЕСТЬ СИЛА</Motto>
          </Brand>
        </Watermark>
      </Workspace>

      <Status>
        <StatusText $w={90}>Страница: 1 из 3</StatusText>
        <StatusSep />
        <StatusText $w={101}>Число слов: 49/906</StatusText>
        <StatusSep $after={8} />
        <Proof />
        <Language $w={114}>русский</Language>
        <StatusSep $after={8} />
        <Macro />
        <Spacer />
        <StatusSep $after={4} />
        <ViewButton $on aria-label="Разметка страницы"><Svg s={11} h={12}><path d="M.5.5h10v11H.5z" fill="#fff" stroke="#4d4a3a" /><path d="M2 3.500h7M2 5.500h7M2 7.500h7M2 9.500h7" stroke="#777" /></Svg></ViewButton>
        <ViewButton aria-label="Режим чтения"><Svg s={11} h={11}><path d="M5.500 2v8M.5 1h4l1 1 1-1h4v8h-4l-1 1-1-1h-4zM2 3.500h2M2 5.500h2M7 3.500h2M7 5.500h2" stroke="#4c5665" /></Svg></ViewButton>
        <ViewButton aria-label="Веб-документ"><Svg s={12} h={12}><path d="M.5.5h8v9h-8zM2 3h5M2 5h5" fill="#fff" stroke="#4c5665" /><circle cx="8.500" cy="8.500" r="3" fill="#4f7f78" /></Svg></ViewButton>
        <ViewButton aria-label="Структура"><Svg s={10} h={11}><path d="M0 1.500h7M3 3.500h6M3 5.500h6M5 7.500h4M3 9.500h5" stroke="#7c8591" /></Svg></ViewButton>
        <ViewButton aria-label="Черновик"><Svg s={10} h={11}><path d="M0 1.500h10M0 3.500h10M0 5.500h10M0 7.500h10M0 9.500h10" stroke="#555e6c" /></Svg></ViewButton>
        <ZoomValue $w={40}>110%</ZoomValue>
        <ZoomGroup>
          <ZoomButton aria-label="Уменьшить"><Svg><circle cx="8" cy="8" r="6.500" fill="#f1f3f6" stroke="#667080" /><path d="M5 8h6" stroke="#333" strokeWidth="1.500" /></Svg></ZoomButton>
          <ZoomSlider type="range" aria-label="Масштаб" min={0} max={100} defaultValue={52} />
          <ZoomButton aria-label="Увеличить"><Svg><circle cx="8" cy="8" r="6.500" fill="#f1f3f6" stroke="#667080" /><path d="M5 8h6M8 5v6" stroke="#333" strokeWidth="1.500" /></Svg></ZoomButton>
        </ZoomGroup>
      </Status>
    </Screen>
  );
}
